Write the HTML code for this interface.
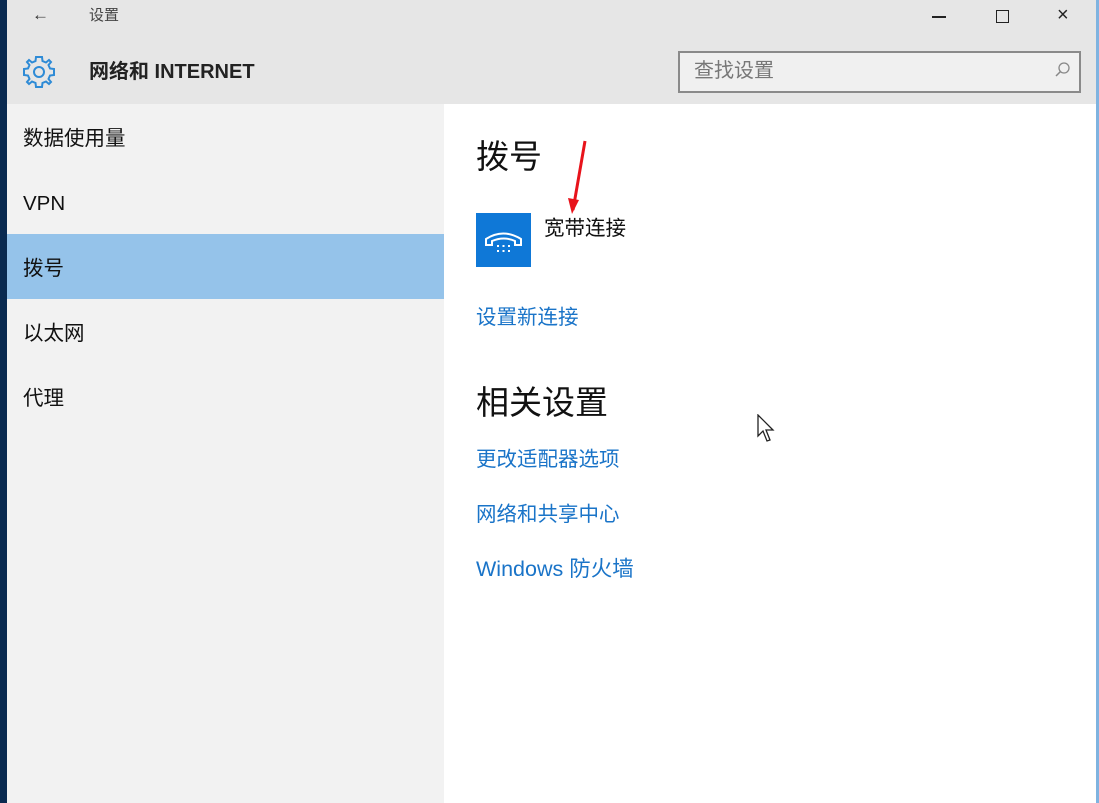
<!DOCTYPE html>
<html><head><meta charset="utf-8"><style>
*{margin:0;padding:0;box-sizing:border-box}
body{width:1099px;height:803px;overflow:hidden;position:relative;background:#fff;font-family:"Liberation Sans","Noto Sans CJK SC",sans-serif;}
.abs{position:absolute}
.t{white-space:nowrap;line-height:1}
</style></head><body>
<div class="abs" style="left:0;top:0;width:7px;height:803px;background:#0a2a50"></div>
<div class="abs" style="left:1096px;top:0;width:3px;height:803px;background:#7fb3e0"></div>
<div class="abs" style="left:7px;top:0;width:1089px;height:104px;background:#e6e6e6"></div>
<div class="abs" style="left:7px;top:104px;width:437px;height:699px;background:#f2f2f2"></div>
<div class="abs" style="left:7px;top:234px;width:437px;height:65px;background:#95c3ea"></div>
<div class="abs t" style="left:32px;top:6px;font-size:17px;color:#333">←</div>
<div class="abs t" style="left:89px;top:8px;font-size:15px;color:#444">设置</div>
<div class="abs" style="left:932px;top:16px;width:14px;height:1.5px;background:#222"></div>
<div class="abs" style="left:996px;top:10px;width:13px;height:13px;border:1.5px solid #222"></div>
<div class="abs t" style="left:1057px;top:5px;font-size:20px;color:#222">×</div>
<svg class="abs" style="left:21px;top:54px" width="36" height="36" viewBox="-18 -18 36 36"><g fill="none" stroke="#2e8bd6" stroke-width="2"><path d="M-3,-15 L3,-15 L3.5,-11 L7,-9.5 L10,-12 L12,-10 L9.5,-7 L11,-3.5 L15,-3 L15,3 L11,3.5 L9.5,7 L12,10 L10,12 L7,9.5 L3.5,11 L3,15 L-3,15 L-3.5,11 L-7,9.5 L-10,12 L-12,10 L-9.5,7 L-11,3.5 L-15,3 L-15,-3 L-11,-3.5 L-9.5,-7 L-12,-10 L-10,-12 L-7,-9.5 L-3.5,-11 Z"/><circle r="5"/></g></svg>
<div class="abs t" style="left:89px;top:62px;font-size:20px;font-weight:bold;color:#222">网络和 INTERNET</div>
<div class="abs" style="left:678px;top:51px;width:403px;height:42px;border:2px solid #8a8a8a;background:#f0f0f0"></div>
<div class="abs t" style="left:694px;top:61px;font-size:20px;color:#777">查找设置</div>
<svg class="abs" style="left:1053px;top:61px" width="18" height="18"><circle cx="11" cy="7" r="5" fill="none" stroke="#888" stroke-width="1.3"/><path d="M7.5 10.5L3 15" stroke="#888" stroke-width="1.5"/></svg>
<div class="abs t" style="left:23px;top:129px;font-size:20.5px;color:#111">数据使用量</div>
<div class="abs t" style="left:23px;top:194px;font-size:20.5px;color:#111">VPN</div>
<div class="abs t" style="left:23px;top:259px;font-size:20.5px;color:#111">拨号</div>
<div class="abs t" style="left:23px;top:324px;font-size:20.5px;color:#111">以太网</div>
<div class="abs t" style="left:23px;top:389px;font-size:20.5px;color:#111">代理</div>
<div class="abs t" style="left:476px;top:140px;font-size:33px;color:#111">拨号</div>
<svg class="abs" style="left:560px;top:138px" width="30" height="80"><path d="M25 3 L13 72" stroke="#e8131b" stroke-width="3"/><path d="M8 60 L12 76 L19 62z" fill="#e8131b"/></svg>
<div class="abs" style="left:476px;top:213px;width:55px;height:54px;background:#0f78d7"></div>
<svg class="abs" style="left:476px;top:213px" width="55" height="54"><path d="M10 32 v-6 q17-11 35 0 v6 h-6 v-4 q-11-5 -23 0 v4z" fill="none" stroke="#fff" stroke-width="2"/><g fill="#fff"><rect x="21" y="32" width="2" height="2"/><rect x="26.5" y="32" width="2" height="2"/><rect x="32" y="32" width="2" height="2"/><rect x="21" y="37" width="2" height="2"/><rect x="26.5" y="37" width="2" height="2"/><rect x="32" y="37" width="2" height="2"/></g></svg>
<div class="abs t" style="left:544px;top:219px;font-size:20.5px;color:#111">宽带连接</div>
<div class="abs t" style="left:476px;top:308px;font-size:20.5px;color:#1a74c8">设置新连接</div>
<div class="abs t" style="left:476px;top:386px;font-size:33px;color:#111">相关设置</div>
<div class="abs t" style="left:476px;top:450px;font-size:20.5px;color:#1a74c8">更改适配器选项</div>
<div class="abs t" style="left:476px;top:505px;font-size:20.5px;color:#1a74c8">网络和共享中心</div>
<div class="abs t" style="left:476px;top:559px;font-size:21.5px;color:#1a74c8">Windows 防火墙</div>
<svg class="abs" style="left:757px;top:414px" width="20" height="30"><path d="M1 1 L1 22 L6 17 L10 27 L13 26 L9 16 L16 16z" fill="#fff" stroke="#222" stroke-width="1.3"/></svg>
</body></html>
